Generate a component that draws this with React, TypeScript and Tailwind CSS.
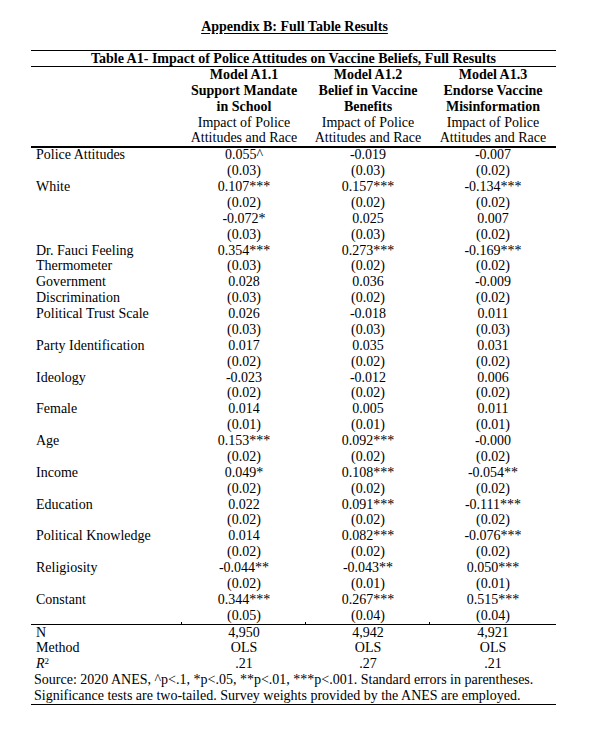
import React from 'react';

const labels: Record<number, string> = {
  0: 'Police Attitudes',
  2: 'White',
  6: 'Dr. Fauci Feeling',
  7: 'Thermometer',
  8: 'Government',
  9: 'Discrimination',
  10: 'Political Trust Scale',
  12: 'Party Identification',
  14: 'Ideology',
  16: 'Female',
  18: 'Age',
  20: 'Income',
  22: 'Education',
  24: 'Political Knowledge',
  26: 'Religiosity',
  28: 'Constant',
};

const cols: string[][] = [
  ['0.055^', '(0.03)', '0.107***', '(0.02)', '-0.072*', '(0.03)', '0.354***', '(0.03)', '0.028', '(0.03)', '0.026', '(0.03)', '0.017', '(0.02)', '-0.023', '(0.02)', '0.014', '(0.01)', '0.153***', '(0.02)', '0.049*', '(0.02)', '0.022', '(0.02)', '0.014', '(0.02)', '-0.044**', '(0.02)', '0.344***', '(0.05)'],
  ['-0.019', '(0.03)', '0.157***', '(0.02)', '0.025', '(0.03)', '0.273***', '(0.02)', '0.036', '(0.02)', '-0.018', '(0.03)', '0.035', '(0.02)', '-0.012', '(0.02)', '0.005', '(0.01)', '0.092***', '(0.02)', '0.108***', '(0.02)', '0.091***', '(0.02)', '0.082***', '(0.02)', '-0.043**', '(0.01)', '0.267***', '(0.04)'],
  ['-0.007', '(0.02)', '-0.134***', '(0.02)', '0.007', '(0.02)', '-0.169***', '(0.02)', '-0.009', '(0.02)', '0.011', '(0.03)', '0.031', '(0.02)', '0.006', '(0.02)', '0.011', '(0.01)', '-0.000', '(0.02)', '-0.054**', '(0.02)', '-0.111***', '(0.02)', '-0.076***', '(0.02)', '0.050***', '(0.01)', '0.515***', '(0.04)'],
];

const headers = [
  ['Model A1.1', 'Support Mandate', 'in School'],
  ['Model A1.2', 'Belief in Vaccine', 'Benefits'],
  ['Model A1.3', 'Endorse Vaccine', 'Misinformation'],
];

const grid = 'grid grid-cols-[151px_124px_124px_126px]';

// thin table rule, 1.5px drawn but only 1px of flow
const Rule = () => <div className="h-[1.5px] mb-[-0.5px] bg-black" />;

const App: React.FC = () => {
  return (
    <div className="min-h-screen bg-white text-black font-['Liberation_Serif',serif] text-[14px] leading-[15.87px]">
      <div className="pt-[19px] text-center">
        <span className="font-bold underline underline-offset-[2px]">Appendix B: Full Table Results</span>
      </div>

      <div className="ml-[31px] w-[525px] mt-[15px]">
        <Rule />
        <div className="text-center font-bold h-[15px] leading-[15px]">
          Table A1- Impact of Police Attitudes on Vaccine Beliefs, Full Results
        </div>
        <Rule />

        <div className={grid}>
          <div />
          {headers.map((h, i) => (
            <div key={i} className="text-center">
              {h.map((line) => (
                <div key={line} className="font-bold">{line}</div>
              ))}
              <div>Impact of Police</div>
              <div>Attitudes and Race</div>
            </div>
          ))}
        </div>
        <Rule />

        <div>
          {cols[0].map((_, r) => (
            <div key={r} className={grid}>
              <div className="pl-[5px] whitespace-nowrap">{labels[r] ?? ''}</div>
              {cols.map((c, i) => (
                <div key={i} className="text-center">{c[r]}</div>
              ))}
            </div>
          ))}
        </div>
        <div className={`${grid} h-[2px] mt-[-2px]`}>
          <div className="border-r border-black" />
          <div className="border-r border-black" />
          <div className="border-r border-black" />
          <div />
        </div>
        <Rule />

        {[
          ['N', '4,950', '4,942', '4,921'],
          ['Method', 'OLS', 'OLS', 'OLS'],
        ].map((row) => (
          <div key={row[0]} className={grid}>
            <div className="pl-[5px]">{row[0]}</div>
            <div className="text-center">{row[1]}</div>
            <div className="text-center">{row[2]}</div>
            <div className="text-center">{row[3]}</div>
          </div>
        ))}
        <div className={grid}>
          <div className="pl-[5px]">
            <i>R</i>
            <sup className="text-[9px] leading-none">2</sup>
          </div>
          <div className="text-center">.21</div>
          <div className="text-center">.27</div>
          <div className="text-center">.21</div>
        </div>

        <div className="pl-[3px]">
          <div>Source: 2020 ANES, ^p&lt;.1, *p&lt;.05, **p&lt;.01, ***p&lt;.001. Standard errors in parentheses.</div>
          <div>Significance tests are two-tailed. Survey weights provided by the ANES are employed.</div>
        </div>
        <Rule />
      </div>
    </div>
  );
};

export default App;
